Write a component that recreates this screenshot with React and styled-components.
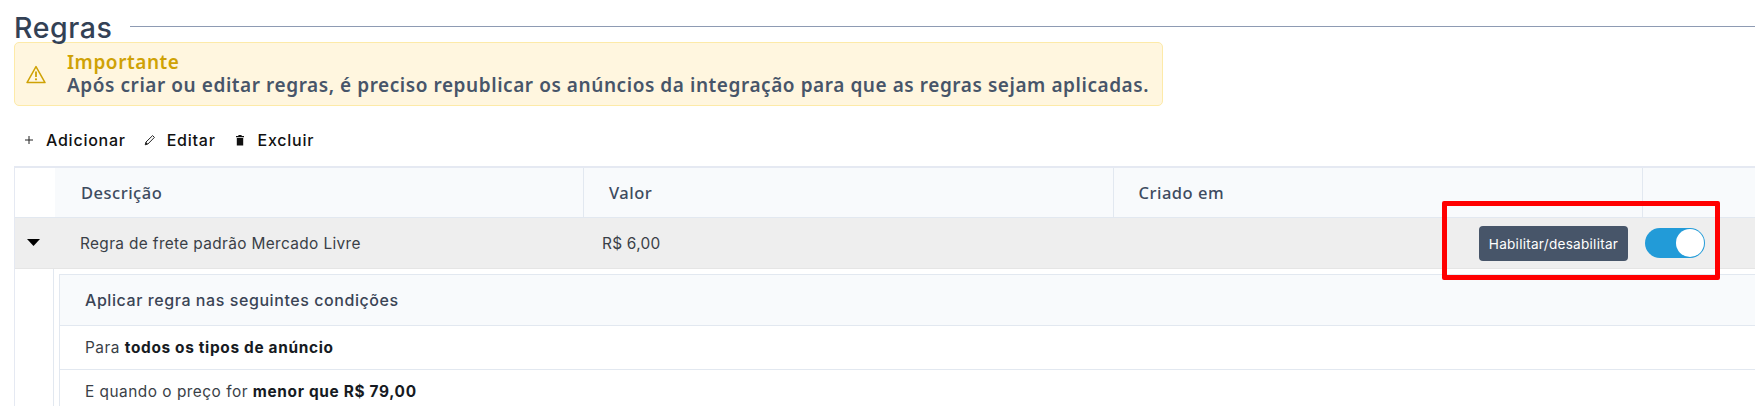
import React from 'react';
import styled, { createGlobalStyle } from 'styled-components';

const Global = createGlobalStyle`
  html, body { margin: 0; padding: 0; background: #fff; overflow: hidden; }
  body { width: 1755px; height: 406px; font-family: Inter, "Liberation Sans", sans-serif; }
  * { box-sizing: border-box; }
`;

const Page = styled.div`
  position: relative;
  width: 1755px;
  height: 406px;
  overflow: hidden;
  padding: 8px 0 0 14px;
`;

const TitleRow = styled.div`
  display: flex;
  align-items: flex-start;
  height: 34px;
  gap: 17px;
`;

const Title = styled.h1`
  margin: 3px 0 0;
  font: 500 28.5px/34px Inter, sans-serif;
  letter-spacing: 0.6px;
  color: #334155;
`;

const Rule = styled.div`
  flex: 1;
  height: 1px;
  margin-top: 18px;
  background: #8e9bb3;
`;

const Alert = styled.div`
  display: flex;
  align-items: center;
  width: 1149px;
  height: 64px;
  padding-left: 11px;
  gap: 21px;
  background: #fff6df;
  border: 1px solid #fdeaa8;
  border-radius: 5px;
`;

const AlertText = styled.div`
  font-family: "Noto Sans", sans-serif;
  font-size: 19px;
  line-height: 23px;
  font-weight: 600;
  letter-spacing: 0.56px;
  margin-top: -1px;
`;

const AlertTitle = styled.div`
  color: #cfa205;
`;

const AlertBody = styled.div`
  color: #475569;
  white-space: nowrap;
`;

const Toolbar = styled.div`
  display: flex;
  align-items: center;
  height: 30px;
  margin-top: 19px;
  padding-left: 9px;
`;

const ToolButton = styled.div`
  display: flex;
  align-items: center;
  margin-right: ${p => p.$after}px;
  color: #111;
  font-size: 16px;
  font-weight: 500;
  letter-spacing: 0.75px;
  white-space: nowrap;
`;

const ToolIcon = styled.svg`
  width: 12px;
  height: 12px;
  margin-right: ${p => p.$gap}px;
  flex: none;
`;

const Table = styled.div`
  margin-top: 11px;
  width: 1741px;
  border-top: 2px solid #e5e9f2;
  border-left: 1px solid #e5e9f2;
  height: 240px;
`;

const Row = styled.div`
  display: grid;
  grid-template-columns: 40px 528px 529.5px 529px 1fr;
  height: ${p => p.$h}px;
  background: ${p => p.$bg || 'transparent'};
  border-bottom: 1px solid ${p => p.$line || '#e2e8f0'};
  align-items: center;
`;

const HeadCell = styled.div`
  height: 100%;
  display: flex;
  align-items: center;
  padding-left: 25px;
  background: #f8fafc;
  border-left: 1px solid ${p => (p.$first ? 'transparent' : '#e2e8f0')};
  font-family: "Noto Sans", sans-serif;
  font-size: 16.5px;
  font-weight: 500;
  letter-spacing: 0.5px;
  color: #3d4b60;
`;

const Corner = styled.div`
  height: 100%;
  background: #fff;
`;

const ArrowCell = styled.div`
  display: flex;
  justify-content: center;
  padding-right: 3px;
  margin-top: -2px;
`;

const Arrow = styled.svg`
  width: 13px;
  height: 7px;
`;

const Cell = styled.div`
  padding-left: ${p => p.$pad}px;
  font-size: 15.4px;
  font-weight: 400;
  letter-spacing: ${p => p.$ls}px;
  color: #3a3f47;
  white-space: nowrap;
`;

const Expansion = styled.div`
  margin-left: 38px;
  padding: 5px 0 0 5px;
  border-left: 1px solid #e2e8f0;
  height: 140px;
`;

const Inner = styled.div`
  border-top: 1px solid #e2e8f0;
  border-left: 1px solid #e2e8f0;
  height: 135px;
`;

const InnerHead = styled.div`
  height: 51px;
  display: flex;
  align-items: center;
  padding-left: 25px;
  background: #f8fafc;
  border-bottom: 1px solid #e2e8f0;
  font-size: 16px;
  font-weight: 500;
  letter-spacing: 0.57px;
  color: #3a4455;
`;

const InnerRow = styled.div`
  height: ${p => p.$h}px;
  display: flex;
  align-items: center;
  padding-left: 25px;
  border-bottom: 1px solid ${p => (p.$last ? 'transparent' : '#e2e8f0')};
  font-size: 15.4px;
  letter-spacing: 0.5px;
  color: #3a3f47;
  white-space: pre;
  b { font-weight: 700; color: #161a22; letter-spacing: 0.67px; }
`;

const Tooltip = styled.div`
  position: absolute;
  left: 1479px;
  top: 226px;
  width: 149px;
  height: 35px;
  display: flex;
  align-items: center;
  justify-content: center;
  border-radius: 4px;
  background: #475569;
  color: #fff;
  font-size: 13.6px;
  letter-spacing: 0.25px;
`;

const Toggle = styled.div`
  position: absolute;
  left: 1645px;
  top: 228px;
  width: 60px;
  height: 30px;
  padding: 1px;
  display: flex;
  justify-content: flex-end;
  border-radius: 15px;
  background: #229bd8;
`;

const Knob = styled.div`
  width: 28px;
  height: 28px;
  border-radius: 50%;
  background: #fff;
`;

const Highlight = styled.div`
  position: absolute;
  left: 1442px;
  top: 201px;
  width: 278px;
  height: 79px;
  border: 5px solid #ff0000;
  border-radius: 2px;
`;

export default function App() {
  return (
    <>
      <Global />
      <Page>
        <TitleRow>
          <Title>Regras</Title>
          <Rule />
        </TitleRow>
        <Alert>
          <svg width="20" height="19" viewBox="0 0 20 19" fill="none" style={{ flex: 'none' }}>
            <path d="M10 1.6 L19 17.6 H1 Z" stroke="#cfa205" strokeWidth="1.5" strokeLinejoin="round" />
            <path d="M10 6.6 V12" stroke="#cfa205" strokeWidth="1.8" />
            <circle cx="10" cy="14.3" r="1.1" fill="#cfa205" />
          </svg>
          <AlertText>
            <AlertTitle>Importante</AlertTitle>
            <AlertBody>Após criar ou editar regras, é preciso republicar os anúncios da integração para que as regras sejam aplicadas.</AlertBody>
          </AlertText>
        </Alert>
        <Toolbar>
          <ToolButton $after={18}>
            <ToolIcon $gap={11} viewBox="0 0 12 12" fill="none">
              <path d="M6 2 V10 M2 6 H10" stroke="#222" strokeWidth="1" />
            </ToolIcon>
            Adicionar
          </ToolButton>
          <ToolButton $after={18}>
            <ToolIcon $gap={11} viewBox="0 0 12 12" fill="none">
              <path d="M1.2 10.8 L2 8 L8.6 1.6 L10.4 3.4 L3.9 10 Z" stroke="#222" strokeWidth="1" fill="#fff" strokeLinejoin="round" />
              <path d="M1.2 10.8 L2 8 L3.9 10 Z" fill="#222" />
            </ToolIcon>
            Editar
          </ToolButton>
          <ToolButton $after={0}>
            <ToolIcon $gap={12} viewBox="0 0 12 12">
              <path d="M2 2 H4.4 V1 H7.6 V2 H10 V3.3 H2 Z M2.8 4 H9.2 V11.5 H2.8 Z" fill="#111" />
            </ToolIcon>
            Excluir
          </ToolButton>
        </Toolbar>
        <Table>
          <Row $h={50}>
            <Corner />
            <HeadCell $first>Descrição</HeadCell>
            <HeadCell>Valor</HeadCell>
            <HeadCell>Criado em</HeadCell>
            <HeadCell />
          </Row>
          <Row $h={51} $bg="#eeeeee" $line="#e5e5e5">
            <ArrowCell>
              <Arrow viewBox="0 0 13 7"><path d="M0 0 H13 L6.5 7 Z" fill="#000" /></Arrow>
            </ArrowCell>
            <Cell $pad={25} $ls={0.36}>Regra de frete padrão Mercado Livre</Cell>
            <Cell $pad={19} $ls={0.25}>R$ 6,00</Cell>
          </Row>
          <Expansion>
            <Inner>
              <InnerHead>Aplicar regra nas seguintes condições</InnerHead>
              <InnerRow $h={44}>Para <b>todos os tipos de anúncio</b></InnerRow>
              <InnerRow $h={44} $last>E quando o preço for <b>menor que R$ 79,00</b></InnerRow>
            </Inner>
          </Expansion>
        </Table>
        <Tooltip>Habilitar/desabilitar</Tooltip>
        <Toggle><Knob /></Toggle>
        <Highlight />
      </Page>
    </>
  );
}
